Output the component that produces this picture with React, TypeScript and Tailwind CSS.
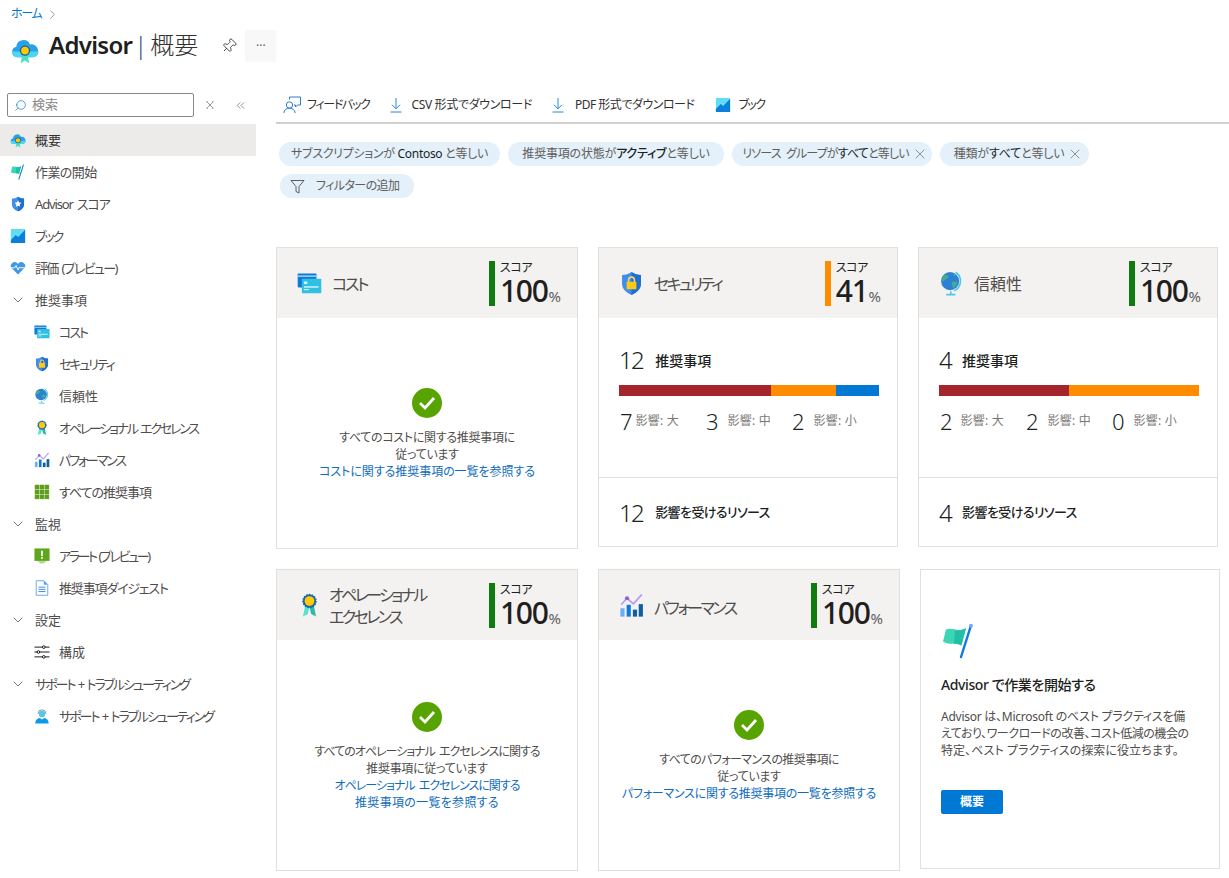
import type { ReactNode } from "react";
import { ChevronDown, ChevronRight, ChevronsLeft, Pin, Search, X } from "lucide-react";

type IconProps = { size?: number };

function Svg({ size = 16, children }: IconProps & { children: ReactNode }) {
  return (
    <svg width={size} height={size} viewBox="0 0 18 18" fill="none" className="shrink-0">
      {children}
    </svg>
  );
}

function AdvisorIcon({ size }: IconProps) {
  return (
    <Svg size={size}>
      <path d="M3.900 13.600a3.400 3.400 0 0 1-.5-6.700 4.600 4.600 0 0 1 8.800-1.500 4.100 4.100 0 0 1 1.900 8.200z" fill="#2aa0e6" />
      <path d="M.6 10a3.400 3.400 0 0 0 3.300 3.600h10.200a4 4 0 0 0 3.700-3.700z" fill="#50d4f0" />
      <path d="M7.200 12l-1 5.500 2.700-1.700 2.800 1.700-1-5.500z" fill="#4fe0c4" />
      <circle cx="9" cy="9.400" r="3.300" fill="#0f5f9e" />
      <circle cx="9" cy="9.400" r="2.500" fill="#ffca00" />
    </Svg>
  );
}

function FlagIcon({ size }: IconProps) {
  return (
    <Svg size={size}>
      <path d="M2.500 3.200C6 2 8 4.800 12.500 2.600L10.200 11.200C7 9.500 4.500 11.500 1 9.200z" fill="#3ad6b6" />
      <path d="M7 3.700c2 .2 3.500 0 5.500-1.100L10.200 11.200C9 10.500 7.800 10.300 6.500 10.400z" fill="#22bfa6" />
      <path d="M14.900 1.600L10 17" stroke="#0f7be0" strokeWidth="1.200" strokeLinecap="round" />
      <circle cx="15" cy="1.400" r="1" fill="#6aaef2" />
    </Svg>
  );
}

function ShieldPath() {
  return (
    <>
      <path d="M9 .8c2 1.500 4.300 2.100 6.800 2.100v6.300c0 3.900-3.100 6.400-6.800 8-3.700-1.600-6.800-4.100-6.800-8V2.900C4.700 2.900 7 2.300 9 .8z" fill="#3f8fe8" />
      <path d="M9 .8c2 1.500 4.300 2.100 6.800 2.100v6.300c0 3.900-3.100 6.400-6.800 8z" fill="#1f6fce" />
    </>
  );
}

function ScoreShieldIcon({ size }: IconProps) {
  return (
    <Svg size={size}>
      <ShieldPath />
      <path d="M9 4.800l1.200 2.500 2.700.3-2 1.900.5 2.700L9 11l-2.400 1.200.5-2.700-2-1.900 2.700-.3z" fill="#fff" />
    </Svg>
  );
}

function LockShieldIcon({ size }: IconProps) {
  return (
    <Svg size={size}>
      <ShieldPath />
      <path d="M6.900 8V6.500a2.100 2.100 0 0 1 4.200 0V8" stroke="#f5d76e" strokeWidth="1.100" />
      <rect x="5.500" y="7.800" width="7" height="5.400" rx=".5" fill="#ffc814" />
    </Svg>
  );
}

function WorkbookIcon({ size }: IconProps) {
  return (
    <Svg size={size}>
      <rect x="1" y="1" width="16" height="16" rx=".6" fill="#5fdcf6" />
      <path d="M1 13.500L6.500 8l2.700 2.200L17 2v15H1z" fill="#0b7fdc" />
      <path d="M1 12L6.500 6.500l2.700 2.200L17 1" stroke="#8fe8fa" strokeWidth=".6" />
    </Svg>
  );
}

function HeartIcon({ size }: IconProps) {
  return (
    <Svg size={size}>
      <path d="M9 16.200L2.300 9.700a4.200 4.200 0 0 1 0-6 4.300 4.300 0 0 1 6 0l.7.700.7-.7a4.300 4.300 0 0 1 6 0 4.200 4.200 0 0 1 0 6z" fill="#3f97e8" />
      <path d="M1 8.800h4.300l1.500-2.600 2.300 5 1.700-3.400 1 1h5" stroke="#fff" strokeWidth="1.100" />
    </Svg>
  );
}

function CardsIcon({ size }: IconProps) {
  return (
    <Svg size={size}>
      <rect x="0.500" y="1.800" width="13.500" height="10" rx=".6" fill="#0f78d8" />
      <rect x="0.500" y="3.200" width="13.500" height="1" fill="#a8def7" />
      <rect x="3.500" y="5.600" width="14" height="10.400" rx=".6" fill="#2fc0e2" />
      <rect x="5" y="7.600" width="2.400" height="1.700" fill="#e8fbff" />
      <rect x="5" y="11" width="10.500" height="1" fill="#d8f8fd" />
      <rect x="5" y="13" width="3.500" height=".8" fill="#d8f8fd" />
    </Svg>
  );
}

function GlobeIcon({ size }: IconProps) {
  return (
    <Svg size={size}>
      <circle cx="8" cy="7.300" r="6.500" fill="#2e7fd8" />
      <path d="M3 3.500c1.500-.8 3-.8 3.800.3.500 1-.9 1.800-2 2.300-1 .5-1.400 2-2.300 1.500C1.800 7 2.200 4.500 3 3.500zM9.500 8c1.300-.6 3.200-.8 3.800.2-.3 1.800-1.500 3.500-3 4-.9-1-1.600-3.300-.8-4.200zM10 2c1-.2 2 .2 2.600 1l-1.400.8z" fill="#3fae8c" />
      <path d="M12 .900a7.600 7.600 0 0 1-1 13.300" stroke="#48c8ea" strokeWidth="1.100" />
      <path d="M8.500 14.600v1.900M5.200 17h6.600" stroke="#48c8ea" strokeWidth="1.100" />
    </Svg>
  );
}

function MedalIcon({ size }: IconProps) {
  return (
    <Svg size={size}>
      <path d="M5.800 9.500L4.300 17l3.500-1.800L9 10z" fill="#50e6cf" />
      <path d="M12.200 9.500l1.500 7.500-3.500-1.800L9 10z" fill="#2fb8a4" />
      <circle cx="9" cy="5.800" r="4.800" fill="#1667ad" strokeDasharray="1.200 .8" stroke="#1667ad" strokeWidth=".8" />
      <circle cx="9" cy="5.800" r="3.500" fill="#ffca00" />
    </Svg>
  );
}

function ChartIcon({ size }: IconProps) {
  return (
    <Svg size={size}>
      <rect x="1" y="11" width="3" height="6" fill="#6aaef2" />
      <rect x="5.500" y="8.500" width="3" height="8.500" fill="#0f78d8" />
      <rect x="10" y="12" width="3" height="5" fill="#0f5f9e" />
      <rect x="14.200" y="8" width="3" height="9" fill="#0f5f9e" />
      <path d="M1.500 8.500L5.800 3.800l4.600 4L16.500 1" stroke="#b79af5" strokeWidth="1.200" />
      <circle cx="5.800" cy="3.800" r="1.500" fill="#8a63d8" />
    </Svg>
  );
}

function GridIcon({ size }: IconProps) {
  const cells = [1, 6.500, 12];
  return (
    <Svg size={size}>
      <rect x="0.500" y="0.500" width="17" height="17" fill="#d6e9b8" />
      {cells.flatMap((y) =>
        cells.map((x) => <rect key={`${x}-${y}`} x={x} y={y} width="4.800" height="4.800" fill="#5e9e1f" />),
      )}
    </Svg>
  );
}

function AlertIcon({ size }: IconProps) {
  return (
    <Svg size={size}>
      <rect x="0.500" y="0.500" width="17" height="14" fill="#5ea61b" />
      <path d="M4 14.500h10l-3 3H7z" fill="#b6d98a" />
      <rect x="8" y="3" width="2" height="6" fill="#fff" />
      <rect x="8" y="10" width="2" height="2" fill="#fff" />
    </Svg>
  );
}

function DocIcon({ size }: IconProps) {
  return (
    <Svg size={size}>
      <path d="M2.500 .8h8.700l4.300 4.300v12.100h-13z" fill="#fff" stroke="#5ea0ef" strokeWidth="1" />
      <path d="M11 .8v4.500h4.500z" fill="#5ea0ef" />
      <path d="M5 8h8M5 10.500h8M5 13h8" stroke="#2f7fd8" strokeWidth="1" />
    </Svg>
  );
}

function SlidersIcon({ size }: IconProps) {
  return (
    <Svg size={size}>
      <path d="M.500 3.500h9M12.500 3.500h5M.500 9h3M6.500 9h11M.500 14.500h9M12.500 14.500h5" stroke="#000" strokeWidth="1" />
      <circle cx="11" cy="3.500" r="1.500" stroke="#000" />
      <circle cx="5" cy="9" r="1.500" stroke="#000" />
      <circle cx="11" cy="14.500" r="1.500" stroke="#000" />
    </Svg>
  );
}

function SupportIcon({ size }: IconProps) {
  return (
    <Svg size={size}>
      <path d="M4.500 6.500a4.500 4.500 0 0 1 9 0" stroke="#7a8a99" strokeWidth="1" />
      <circle cx="9" cy="6.800" r="3.600" fill="#50c8f0" />
      <path d="M1.500 17.500c0-4 2.500-6 5-6.300L9 13l2.500-1.800c2.500.3 5 2.300 5 6.300z" fill="#0a9ce8" />
    </Svg>
  );
}

function FeedbackIcon() {
  return (
    <svg width="18" height="18" viewBox="0 0 18 18" fill="none" className="shrink-0" stroke="#2b7cd3" strokeWidth="1">
      <circle cx="6.500" cy="9" r="3.200" />
      <path d="M.8 17c.3-3 2.500-4.800 5.700-4.800s5.400 1.800 5.700 4.800" />
      <path d="M6.500 3.500V1h11v8h-3l-2 2V9H11" />
    </svg>
  );
}

function DownloadIcon() {
  return (
    <svg width="14" height="16" viewBox="0 0 14 16" fill="none" className="shrink-0" stroke="#2b86de" strokeWidth="1">
      <path d="M7 1v10.500M3 7.800l4 4 4-4" />
      <path d="M1.500 15h11" />
    </svg>
  );
}

function FunnelIcon() {
  return (
    <svg width="15" height="15" viewBox="0 0 15 15" fill="none" className="shrink-0" stroke="#605e5c" strokeWidth="1">
      <path d="M1 1.500h13L9 7.500v6.500l-3-1.500v-5z" />
    </svg>
  );
}

function ClearIcon() {
  return (
    <svg width="8" height="8" viewBox="0 0 10 10" fill="none" className="shrink-0" stroke="#8a8886" strokeWidth="1.100">
      <path d="M1.500 1.500l7 7M8.500 1.500l-7 7M.5 1h2M7.500 1h2M.5 9h2M7.500 9h2" />
    </svg>
  );
}

const navItems: {
  label: string;
  Icon?: (p: IconProps) => ReactNode;
  level: "top" | "group" | "sub";
  tracking: string;
  selected?: boolean;
}[] = [
  { label: "概要", Icon: AdvisorIcon, level: "top", tracking: "tracking-[0px]", selected: true },
  { label: "作業の開始", Icon: FlagIcon, level: "top", tracking: "tracking-[-0.6px]" },
  { label: "Advisor スコア", Icon: ScoreShieldIcon, level: "top", tracking: "tracking-[-1.15px]" },
  { label: "ブック", Icon: WorkbookIcon, level: "top", tracking: "tracking-[-2px]" },
  { label: "評価 (プレビュー)", Icon: HeartIcon, level: "top", tracking: "tracking-[-1.65px]" },
  { label: "推奨事項", level: "group", tracking: "tracking-[0px]" },
  { label: "コスト", Icon: CardsIcon, level: "sub", tracking: "tracking-[-2px]" },
  { label: "セキュリティ", Icon: LockShieldIcon, level: "sub", tracking: "tracking-[-2.1px]" },
  { label: "信頼性", Icon: GlobeIcon, level: "sub", tracking: "tracking-[0px]" },
  { label: "オペレーショナル エクセレンス", Icon: MedalIcon, level: "sub", tracking: "tracking-[-2.2px]" },
  { label: "パフォーマンス", Icon: ChartIcon, level: "sub", tracking: "tracking-[-2.1px]" },
  { label: "すべての推奨事項", Icon: GridIcon, level: "sub", tracking: "tracking-[-1px]" },
  { label: "監視", level: "group", tracking: "tracking-[0px]" },
  { label: "アラート (プレビュー)", Icon: AlertIcon, level: "sub", tracking: "tracking-[-2.4px]" },
  { label: "推奨事項ダイジェスト", Icon: DocIcon, level: "sub", tracking: "tracking-[-1.15px]" },
  { label: "設定", level: "group", tracking: "tracking-[0px]" },
  { label: "構成", Icon: SlidersIcon, level: "sub", tracking: "tracking-[0px]" },
  { label: "サポート + トラブルシューティング", level: "group", tracking: "tracking-[-2.05px]" },
  { label: "サポート + トラブルシューティング", Icon: SupportIcon, level: "sub", tracking: "tracking-[-2.05px]" },
];

function Sidebar() {
  return (
    <aside className="w-[256px] shrink-0 pt-[4px]">
      <div className="flex h-[32px] items-center pl-[7px]">
        <div className="flex h-[24px] w-[187px] items-center gap-[5px] rounded-[2px] border border-[#8a8886] pl-[6px]">
          <Search size={13} strokeWidth={1.25} className="-scale-x-100 text-[#0078d4]" />
          <span className="text-[13px] text-[#8a8886]">検索</span>
        </div>
        <div className="ml-[12px]">
          <ClearIcon />
        </div>
        <ChevronsLeft size={13} strokeWidth={1} className="ml-[20px] text-[#323130]" />
      </div>
      <nav className="mt-[3px]">
        {navItems.map((item, i) => (
          <div
            key={i}
            className={`flex h-[32px] items-center gap-[9px] text-[13px] text-[#4f4d4b] [word-spacing:2px] ${item.tracking} ${
              item.level === "sub" ? "pl-[34px]" : "pl-[10px]"
            } ${item.selected ? "bg-[#edebe9] text-[#323130]" : ""}`}
          >
            {item.Icon ? (
              <item.Icon size={16} />
            ) : (
              <ChevronDown size={16} strokeWidth={1} className="shrink-0 text-[#323130]" />
            )}
            <span className="pt-[2px] whitespace-nowrap">{item.label}</span>
          </div>
        ))}
      </nav>
    </aside>
  );
}

function Toolbar() {
  return (
    <div className="flex h-[31px] items-center border-b-2 border-[#d2d0ce] pb-[6px] pl-[7px] text-[12px] tracking-[-0.35px] text-[#323130]">
      <FeedbackIcon />
      <span className="ml-[6px] tracking-[-1.35px]">フィードバック</span>
      <div className="ml-[20px]">
        <DownloadIcon />
      </div>
      <span className="ml-[8px]">CSV 形式でダウンロード</span>
      <div className="ml-[19px]">
        <DownloadIcon />
      </div>
      <span className="ml-[10px] tracking-[-0.5px]">PDF 形式でダウンロード</span>
      <div className="ml-[21px]">
        <WorkbookIcon size={16} />
      </div>
      <span className="ml-[7px] tracking-[-1.5px]">ブック</span>
    </div>
  );
}

function Chip({ className, close, children }: { className: string; close?: boolean; children: ReactNode }) {
  return (
    <div className={`flex h-[24px] items-center justify-center gap-[3px] rounded-full bg-[#e4f0fa] text-[12px] text-[#605e5c] ${className}`}>
      <span className="whitespace-nowrap">{children}</span>
      {close ? <X size={16} strokeWidth={1} className="text-[#605e5c]" /> : null}
    </div>
  );
}

function Filters() {
  return (
    <div className="mt-[18px] pl-[3px]">
      <div className="flex gap-[8px]">
        <Chip className="w-[221px] tracking-[-0.3px]">
          サブスクリプションが <span className="text-[#201f1e]">Contoso</span> と等しい
        </Chip>
        <Chip className="w-[216px] tracking-[-0.2px]">
          推奨事項の状態が<span className="font-medium text-[#201f1e]">アクティブ</span>と等しい
        </Chip>
        <Chip className="w-[200px] pl-[6px] tracking-[-0.85px] [word-spacing:3px]" close>
          リソース グループが<span className="text-[#201f1e]">すべて</span>と等しい
        </Chip>
        <Chip className="w-[149px] pl-[8px] tracking-[-0.2px]" close>
          種類が<span className="text-[#201f1e]">すべて</span>と等しい
        </Chip>
      </div>
      <div className="mt-[8px] ml-[1px] flex h-[24px] w-[134px] items-center gap-[11px] rounded-full bg-[#e4f0fa] pl-[10px] text-[12px] tracking-[-0.6px] text-[#605e5c]">
        <FunnelIcon />
        <span>フィルターの追加</span>
      </div>
    </div>
  );
}

function CardHeader({
  Icon,
  title,
  score,
  barColor,
  titleClass,
}: {
  Icon: (p: IconProps) => ReactNode;
  title: ReactNode;
  score: number;
  barColor: string;
  titleClass: string;
}) {
  return (
    <div className="flex h-[70px] shrink-0 items-center justify-between bg-[#f3f2f1] pr-[16px] pl-[20px]">
      <div className="flex items-center gap-[10px]">
        <div className="flex w-[25px] justify-center">
          <Icon size={25} />
        </div>
        <div className={`text-[16px] leading-[22px] text-[#4f4d4b] ${titleClass}`}>{title}</div>
      </div>
      <div className="flex h-[45px] items-stretch gap-[5px]">
        <div className={`w-[6px] ${barColor}`} />
        <div>
          <div className="h-[15px] text-[12px] leading-[14px] tracking-[-0.4px] text-[#201f1e]">スコア</div>
          <div className="flex h-[30px] items-baseline text-[30px] leading-[30px] font-medium tracking-[-1.3px] text-[#201f1e]">
            {score}
            <span className="ml-[1px] text-[15px] font-normal tracking-normal text-[#605e5c]">%</span>
          </div>
        </div>
      </div>
    </div>
  );
}

function Card({ className, children }: { className: string; children: ReactNode }) {
  return <section className={`flex shrink-0 flex-col border border-[#e1dfdd] bg-white ${className}`}>{children}</section>;
}

type Line = { text: string; tracking: string };

function AllClear({ lines, links }: { lines: Line[]; links: Line[] }) {
  return (
    <div className="flex flex-1 flex-col items-center justify-center pt-[2px] text-center text-[12px] leading-[17px] [word-spacing:2px]">
      <div className="mb-[11px] flex h-[30px] w-[30px] items-center justify-center rounded-full bg-[#57a300]">
        <svg width="18" height="14" viewBox="0 0 18 14" fill="none" stroke="#fff" strokeWidth="2.800">
          <path d="M2 7l5 5 9-10" />
        </svg>
      </div>
      {lines.map((line) => (
        <div key={line.text} className={`whitespace-nowrap text-[#4f4d4b] ${line.tracking}`}>
          {line.text}
        </div>
      ))}
      {links.map((line) => (
        <div key={line.text} className={`whitespace-nowrap text-[#0f6cbd] ${line.tracking}`}>
          {line.text}
        </div>
      ))}
    </div>
  );
}

type Impact = { count: number; label: string; labelGap: string };

function Recommendations({
  total,
  impacts,
  segments,
  gap,
}: {
  total: number;
  impacts: Impact[];
  segments: { width: string; color: string }[];
  gap: string;
}) {
  return (
    <>
      <div className="h-[160px] shrink-0 border-b border-[#e1dfdd] px-[20px] pt-[27px]">
        <div className={`flex h-[30px] items-center ${gap}`}>
          <span className="text-[24px] font-light tracking-[-1.6px] text-[#201f1e]">{total}</span>
          <span className="text-[14px] font-medium text-[#201f1e]">推奨事項</span>
        </div>
        <div className="mt-[10px] flex h-[11px] w-[260px]">
          {segments.map((s) => (
            <div key={s.color} className={`${s.width} ${s.color}`} />
          ))}
        </div>
        <div className="mt-[10px] flex">
          {impacts.map((it) => (
            <div key={it.label} className="flex h-[30px] w-[87px] items-center pl-[1px]">
              <span className="text-[22px] font-light text-[#201f1e]">{it.count}</span>
              <span className={`text-[12px] tracking-[0.2px] text-[#7a7876] ${it.labelGap}`}>{it.label}</span>
            </div>
          ))}
        </div>
      </div>
      <div className={`flex flex-1 items-center px-[20px] pt-[2px] ${gap}`}>
        <span className="text-[24px] font-light tracking-[-1.6px] text-[#201f1e]">{total}</span>
        <span className="text-[13px] font-medium tracking-[-0.6px] text-[#201f1e]">影響を受けるリソース</span>
      </div>
    </>
  );
}

function Intro() {
  return (
    <div className="px-[20px] pt-[53px] text-[#4f4d4b]">
      <FlagIcon size={36} />
      <h3 className="mt-[15px] text-[14px] font-medium tracking-[-0.4px] text-[#201f1e]">Advisor で作業を開始する</h3>
      <p className="mt-[13px] text-[12px] leading-[17px] whitespace-nowrap">
        <span className="block tracking-[-0.25px]">Advisor は、Microsoft のベスト プラクティスを備</span>
        <span className="block tracking-[-0.45px]">えており、ワークロードの改善、コスト低減の機会の</span>
        <span className="block tracking-[0.05px]">特定、ベスト プラクティスの探索に役立ちます。</span>
      </p>
      <button className="mt-[31px] h-[24px] w-[62px] rounded-[2px] bg-[#0078d4] text-[12px] font-semibold text-white">概要</button>
    </div>
  );
}

export default function App() {
  return (
    <div className="h-[878px] w-[1229px] overflow-hidden bg-white font-['Noto_Sans','Noto_Sans_CJK_JP',sans-serif] text-[#323130] [font-feature-settings:'palt']">
      <header className="h-[85px] pt-[5px] pl-[11px]">
        <div className="flex h-[18px] items-center text-[12px] tracking-[-1.4px] text-[#0078d4]">
          ホーム
          <ChevronRight size={15} strokeWidth={1} className="ml-[4px] text-[#605e5c]" />
        </div>
        <div className="mt-[7px] flex h-[32px] items-center">
          <div className="mt-[8px] mr-[10px]">
            <AdvisorIcon size={28} />
          </div>
          <h1 className="pb-[2px] text-[24px] font-semibold tracking-[-0.7px] text-[#201f1e]">Advisor</h1>
          <span className="mr-[3px] ml-[2px] pb-[2px] text-[24px] font-light text-[#1f4f8f]">|</span>
          <span className="pb-[2px] text-[24px] font-light text-[#323130]">概要</span>
          <Pin size={16} strokeWidth={1.25} className="ml-[23px] rotate-45 text-[#323130]" />
          <div className="ml-[8px] flex h-[32px] w-[31px] items-center justify-center bg-[#f8f8f8] text-[12px] text-[#605e5c]">···</div>
        </div>
      </header>
      <div className="flex">
        <Sidebar />
        <main className="ml-[20px] flex-1 pt-[8px]">
          <Toolbar />
          <Filters />
          <div className="mt-[49px] flex items-start gap-[20px]">
            <Card className="h-[302px] w-[302px]">
              <CardHeader Icon={CardsIcon} title="コスト" titleClass="mt-[2px] tracking-[-2.2px]" score={100} barColor="bg-[#107c10]" />
              <AllClear
                lines={[
                  { text: "すべてのコストに関する推奨事項に", tracking: "tracking-[-0.3px]" },
                  { text: "従っています", tracking: "tracking-[-0.3px]" },
                ]}
                links={[{ text: "コストに関する推奨事項の一覧を参照する", tracking: "tracking-[-0.05px]" }]}
              />
            </Card>
            <Card className="h-[300px] w-[300px]">
              <CardHeader Icon={LockShieldIcon} title="セキュリティ" titleClass="mt-[2px] tracking-[-2.6px]" score={41} barColor="bg-[#ff8c00]" />
              <Recommendations
                total={12}
                gap="gap-[12px]"
                segments={[
                  { width: "w-[152px]", color: "bg-[#a4262c]" },
                  { width: "w-[65px]", color: "bg-[#ff8c00]" },
                  { width: "w-[43px]", color: "bg-[#0078d4]" },
                ]}
                impacts={[
                  { count: 7, label: "影響: 大", labelGap: "ml-[3px]" },
                  { count: 3, label: "影響: 中", labelGap: "ml-[9px]" },
                  { count: 2, label: "影響: 小", labelGap: "ml-[9px]" },
                ]}
              />
            </Card>
            <Card className="h-[300px] w-[300px]">
              <CardHeader Icon={GlobeIcon} title="信頼性" titleClass="mt-[2px]" score={100} barColor="bg-[#107c10]" />
              <Recommendations
                total={4}
                gap="gap-[11px]"
                segments={[
                  { width: "w-[130px]", color: "bg-[#a4262c]" },
                  { width: "w-[130px]", color: "bg-[#ff8c00]" },
                ]}
                impacts={[
                  { count: 2, label: "影響: 大", labelGap: "ml-[8px]" },
                  { count: 2, label: "影響: 中", labelGap: "ml-[9px]" },
                  { count: 0, label: "影響: 小", labelGap: "ml-[9px]" },
                ]}
              />
            </Card>
          </div>
          <div className="mt-[20px] flex items-start gap-[20px]">
            <Card className="h-[302px] w-[302px]">
              <CardHeader
                Icon={MedalIcon}
                title={
                  <>
                    オペレーショナル
                    <br />
                    エクセレンス
                  </>
                }
                titleClass="mt-[2px] -ml-[3px] tracking-[-2.6px]"
                score={100}
                barColor="bg-[#107c10]"
              />
              <AllClear
                lines={[
                  { text: "すべてのオペレーショナル エクセレンスに関する", tracking: "tracking-[-1px]" },
                  { text: "推奨事項に従っています", tracking: "tracking-[-0.3px]" },
                ]}
                links={[
                  { text: "オペレーショナル エクセレンスに関する", tracking: "tracking-[-1px]" },
                  { text: "推奨事項の一覧を参照する", tracking: "tracking-[0.3px]" },
                ]}
              />
            </Card>
            <Card className="h-[302px] w-[302px]">
              <CardHeader Icon={ChartIcon} title="パフォーマンス" titleClass="mt-[6px] tracking-[-2.5px]" score={100} barColor="bg-[#107c10]" />
              <AllClear
                lines={[
                  { text: "すべてのパフォーマンスの推奨事項に", tracking: "tracking-[-0.6px]" },
                  { text: "従っています", tracking: "tracking-[-0.3px]" },
                ]}
                links={[{ text: "パフォーマンスに関する推奨事項の一覧を参照する", tracking: "tracking-[-0.25px]" }]}
              />
            </Card>
            <Card className="h-[300px] w-[300px]">
              <Intro />
            </Card>
          </div>
        </main>
      </div>
    </div>
  );
}
